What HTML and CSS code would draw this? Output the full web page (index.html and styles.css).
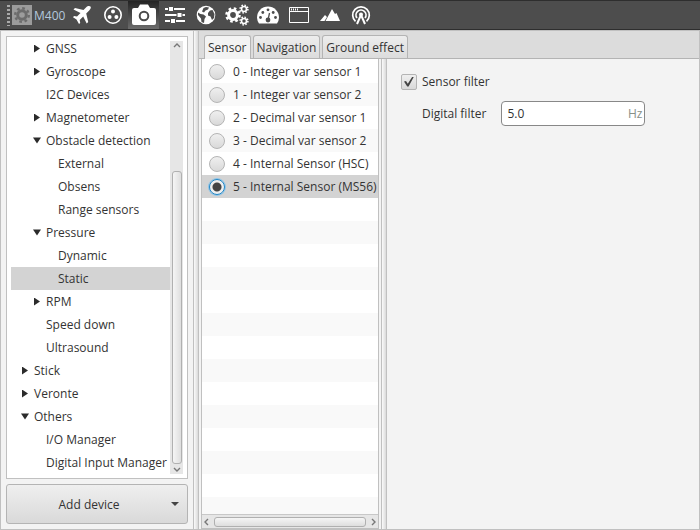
FILE: index.html
```html
<!DOCTYPE html>
<html lang="en">
<head>
    <meta charset="UTF-8">
    <meta name="viewport" content="width=device-width, initial-scale=1.0">
    <title>M400</title>
    <link rel="stylesheet" href="styles.css">
</head>
<body>
    <header class="toolbar">
        <span class="grip"></span>
        <span class="platform">
            <svg viewBox="0 0 20 20" width="20" height="20">
                <rect width="20" height="20" fill="#9c9c9c"/>
                <g fill="none" stroke="#6c6c6c">
                    <circle cx="10" cy="10" r="6.8" stroke-width="2.4" stroke-dasharray="2.67 2.67"/>
                    <circle cx="10" cy="10" r="4.3" stroke-width="3"/>
                </g>
            </svg>
            M400
        </span>
        <button class="tool" aria-label="Platform">
            <svg viewBox="0 0 20 20" width="20" height="20"><path fill="#fff" d="M18.5 1.500c-1-1-3-.5-4 .5l-3 3L3 3 1.500 4.500l7 3.500-3.500 3.500-3-.5L1 12.200l3.500 2.300L7 19l1.200-1-.5-3 3.500-3.500 3.500 7 1.500-1.500-2-8.500 3-3c1-1 2.300-3 1.300-4z"/></svg>
        </button>
        <button class="tool" aria-label="Control">
            <svg viewBox="0 0 20 20" width="20" height="20"><circle cx="10" cy="10" r="8.200" fill="none" stroke="#fff" stroke-width="1.600"/><g fill="#fff"><circle cx="10" cy="6.500" r="2"/><circle cx="6.600" cy="12" r="2"/><circle cx="13.400" cy="12" r="2"/></g></svg>
        </button>
        <button class="tool active" aria-label="Devices">
            <svg viewBox="0 0 26 22" width="26" height="22"><path fill="#fff" d="M3 4h4l2-3.500h8L19 4h4a2 2 0 0 1 2 2v13a2 2 0 0 1-2 2H3a2 2 0 0 1-2-2V6a2 2 0 0 1 2-2z"/><circle cx="13" cy="12" r="4.300" fill="none" stroke="#4a4a4a" stroke-width="2"/></svg>
        </button>
        <button class="tool" aria-label="Variables">
            <svg viewBox="0 0 20 20" width="20" height="20"><path d="M0 4h20M0 10h20M0 16h20" stroke="#fff" stroke-width="2"/><path fill="#fff" stroke="#4d4d4d" d="M3.500 1.500h5v5h-5zM12 7.500h5v5h-5zM5.500 13.500h5v5h-5z"/></svg>
        </button>
        <button class="tool" aria-label="World">
            <svg viewBox="0 0 20 20" width="20" height="20"><circle cx="10" cy="10" r="9.300" fill="#fff"/><path fill="#4d4d4d" d="M7.500 3l2.500-1 3 .5-1 2-2.500 1L8 7.500l-2-1zM2 7.500l2.500 1.500 3 .5 2.500 2-1.500 2.500-.5 4-2.500-1-.5-3.500L2 10zM12 8l2-2.500 2.500-.5 2 4-.5 4-2 2-1.500-3.500-2.500-1z"/></svg>
        </button>
        <button class="tool" aria-label="Setup">
            <svg viewBox="0 0 24 22" width="24" height="22" fill="none" stroke="#fff"><circle cx="8" cy="11" r="4.400" stroke-width="3"/><circle cx="8" cy="11" r="6.500" stroke-width="2.600" stroke-dasharray="2.550 2.550"/><circle cx="19" cy="5" r="2.500" stroke-width="1.600"/><circle cx="19" cy="5" r="3.900" stroke-width="1.500" stroke-dasharray="1.530 1.530"/><circle cx="19" cy="17" r="2.500" stroke-width="1.600"/><circle cx="19" cy="17" r="3.900" stroke-width="1.500" stroke-dasharray="1.530 1.530"/></svg>
        </button>
        <button class="tool" aria-label="Gauge">
            <svg viewBox="0 0 22 18" width="22" height="18">
                <path fill="#fff" d="M2 17.500A11 11 0 0 1 0 11.500a11 11 0 0 1 22 0 11 11 0 0 1-2 6z"/>
                <g fill="#4d4d4d"><circle cx="3.500" cy="11.500" r="1.400"/><circle cx="5.800" cy="6.500" r="1.400"/><circle cx="11" cy="3.800" r="1.400"/><circle cx="16.200" cy="6.500" r="1.400"/><circle cx="18.500" cy="11.500" r="1.400"/><circle cx="11" cy="14" r="2.400"/></g>
                <path d="M11 14l1.500-7" stroke="#4d4d4d" stroke-width="1.300"/>
            </svg>
        </button>
        <button class="tool" aria-label="Panel">
            <svg viewBox="0 0 20 18" width="20" height="18"><path d="M.5 1.500h19v15H.5zM.5 5.500h19" fill="none" stroke="#fff"/><path d="M2 3.500h7" stroke="#fff" stroke-width="2" stroke-dasharray="1 1"/></svg>
        </button>
        <button class="tool" aria-label="Terrain">
            <svg viewBox="0 0 20 14" width="20" height="14"><path fill="#fff" d="M0 13l5-6 2 2-2.500 4zM5.500 13l6.500-12 3 5 1.500-1L20 13z"/></svg>
        </button>
        <button class="tool" aria-label="Communications">
            <svg viewBox="0 0 20 20" width="20" height="20" fill="none" stroke="#fff" stroke-width="1.700"><path d="M4.500 16.300A8.300 8.300 0 1 1 15.500 16.300M6 13A5 5 0 1 1 14 13"/><path d="M6 19l3.500-8h1l3.500 8" stroke-width="2"/><circle cx="10" cy="9.500" r="2" fill="#fff" stroke="none"/></svg>
        </button>
    </header>

    <main class="content">
        <section class="sidebar">
            <div class="tree-box">
                <ul class="tree">
                    <li class="level-2 closed">GNSS</li>
                    <li class="level-2 closed">Gyroscope</li>
                    <li class="level-2">I2C Devices</li>
                    <li class="level-2 closed">Magnetometer</li>
                    <li class="level-2 open">Obstacle detection</li>
                    <li class="level-3">External</li>
                    <li class="level-3">Obsens</li>
                    <li class="level-3">Range sensors</li>
                    <li class="level-2 open">Pressure</li>
                    <li class="level-3">Dynamic</li>
                    <li class="level-3 selected">Static</li>
                    <li class="level-2 closed">RPM</li>
                    <li class="level-2">Speed down</li>
                    <li class="level-2">Ultrasound</li>
                    <li class="level-1 closed">Stick</li>
                    <li class="level-1 closed">Veronte</li>
                    <li class="level-1 open">Others</li>
                    <li class="level-2">I/O Manager</li>
                    <li class="level-2">Digital Input Manager</li>
                </ul>
                <div class="scroll-v">
                    <svg viewBox="0 0 8 5" width="8" height="5"><path d="M1 4l3-3 3 3"/></svg>
                    <div class="track-v"><div class="thumb-v"></div></div>
                    <svg viewBox="0 0 8 5" width="8" height="5"><path d="M1 1l3 3 3-3"/></svg>
                </div>
            </div>
            <button class="add-device">
                <span>Add device</span>
                <svg viewBox="0 0 8 4" width="8" height="4"><path d="M0 0h8L4 4z" fill="#444"/></svg>
            </button>
        </section>
        <div class="divider"></div>

        <section class="device">
            <nav class="tabs">
                <button class="tab current">Sensor</button>
                <button class="tab">Navigation</button>
                <button class="tab">Ground effect</button>
            </nav>
            <div class="tab-page">
                <div class="sensor-list">
                    <div class="rows">
                        <label><input type="radio" name="sensor">0 - Integer var sensor 1</label>
                        <label><input type="radio" name="sensor">1 - Integer var sensor 2</label>
                        <label><input type="radio" name="sensor">2 - Decimal var sensor 1</label>
                        <label><input type="radio" name="sensor">3 - Decimal var sensor 2</label>
                        <label><input type="radio" name="sensor">4 - Internal Sensor (HSC)</label>
                        <label class="selected"><input type="radio" name="sensor" checked>5 - Internal Sensor (MS56)</label>
                    </div>
                    <div class="scroll-h">
                        <svg viewBox="0 0 5 8" width="5" height="8"><path d="M4 1L1 4l3 3"/></svg>
                        <div class="thumb-h"></div>
                        <svg viewBox="0 0 5 8" width="5" height="8"><path d="M1 1l3 3-3 3"/></svg>
                    </div>
                </div>
                <div class="divider"></div>
                <form class="settings">
                    <label class="check"><input type="checkbox" checked>Sensor filter</label>
                    <div class="field">
                        <label for="digital-filter">Digital filter</label>
                        <div class="unit-input">
                            <input type="text" id="digital-filter" value="5.0">
                            <span>Hz</span>
                        </div>
                    </div>
                </form>
            </div>
        </section>
    </main>
</body>
</html>
```
FILE: styles.css
```css
* {
    box-sizing: border-box;
}
body {
    margin: 0;
    height: 100vh;
    display: flex;
    flex-direction: column;
    background-color: #f3f3f3;
    color: #333;
    font-family: "Open Sans", "Noto Sans", sans-serif;
    font-size: 12px;
}
button, input {
    font: inherit;
    color: inherit;
}

/* toolbar */
.toolbar {
    display: flex;
    height: 30px;
    padding-left: 7px;
    background-color: #4d4d4d;
    border-top: 1px solid #2e2e2e;
    border-bottom: 1px solid #2e2e2e;
}
.grip {
    width: 3px;
    margin: 4px 2px 3px 0;
    background: repeating-linear-gradient(#aaa 0 2px, transparent 2px 4px);
}
.platform {
    display: flex;
    align-items: center;
    gap: 2px;
    width: 54px;
    color: #b4c8dc;
}
.tool {
    display: flex;
    align-items: center;
    justify-content: center;
    width: 31px;
    padding: 0;
    border: none;
    background: none;
}
.tool.active {
    background: linear-gradient(#242424, #6c6c6c);
}

/* main areas */
.content {
    flex: 1;
    display: flex;
    min-height: 0;
    border: 1px solid #c0c0c0;
}
.divider {
    width: 6px;
    background: linear-gradient(to right, #fafafa, #dadada);
    border-left: 1px solid #c0c0c0;
    border-right: 1px solid #c0c0c0;
}
.sidebar {
    display: flex;
    flex-direction: column;
    gap: 5px;
    width: 192px;
    padding: 5px;
}
.tree-box {
    flex: 1;
    display: flex;
    min-height: 0;
    padding: 0 4px;
    background-color: #fff;
    border: 1px solid #c0c0c0;
}
.tree {
    flex: 1;
    margin: 0;
    padding: 0;
    list-style: none;
    overflow: hidden;
    white-space: nowrap;
}
.tree li {
    display: flex;
    align-items: center;
    height: 23px;
}
.tree li::before {
    content: "";
    width: 8px;
    height: 8px;
    margin-right: 5px;
}
.tree .closed::before {
    background-color: #2b2b2b;
    clip-path: polygon(1px 0, 7px 4px, 1px 8px);
}
.tree .open::before {
    background-color: #2b2b2b;
    clip-path: polygon(0 1px, 8px 1px, 4px 7px);
}
.level-1 { padding-left: 10px; }
.level-2 { padding-left: 22px; }
.level-3 { padding-left: 34px; }
.tree .selected {
    background-color: #d3d3d3;
}

/* scroll bars */
.scroll-v {
    display: flex;
    flex-direction: column;
    align-items: center;
    gap: 3px;
    width: 13px;
    margin: 4px 0;
    padding: 2px 0;
    background-color: #e6e6e6;
}
.scroll-v path, .scroll-h path {
    fill: none;
    stroke: #777;
    stroke-width: 1.4;
}
.track-v {
    flex: 1;
    display: flex;
    align-items: flex-end;
    width: 10px;
}
.thumb-v {
    width: 10px;
    height: 71%;
    background: linear-gradient(to right, #f5f5f5, #dedede);
    border: 1px solid #b0b0b0;
    border-radius: 3px;
}
.scroll-h {
    display: flex;
    align-items: center;
    gap: 5px;
    height: 14px;
    padding: 0 2px;
    background-color: #e6e6e6;
    border-top: 1px solid #c8c8c8;
}
.thumb-h {
    flex: 1;
    height: 10px;
    background: linear-gradient(#f5f5f5, #dedede);
    border: 1px solid #b0b0b0;
    border-radius: 3px;
}

.add-device {
    display: flex;
    align-items: center;
    height: 40px;
    padding: 0 8px 0 0;
    background: linear-gradient(#efefef, #d9d9d9);
    border: 1px solid #b4b4b4;
    border-radius: 3px;
}
.add-device span {
    flex: 1;
}

/* tabs */
.device {
    flex: 1;
    display: flex;
    flex-direction: column;
    min-width: 0;
}
.tabs {
    display: flex;
    align-items: flex-end;
    gap: 2px;
    height: 28px;
    padding-left: 5px;
    background-color: #dcdcdc;
    border-bottom: 1px solid #b4b4b4;
}
.tab {
    height: 23px;
    padding: 0 3px;
    background: linear-gradient(#ededed, #dcdcdc);
    border: 1px solid #b4b4b4;
    border-bottom: none;
    border-radius: 3px 3px 0 0;
}
.tab.current {
    height: 24px;
    margin-bottom: -1px;
    background: #f3f3f3;
}
.tab-page {
    flex: 1;
    display: flex;
    min-height: 0;
    padding-left: 2px;
}

/* sensor list */
.sensor-list {
    display: flex;
    flex-direction: column;
    width: 178px;
    margin-right: 2px;
    padding-top: 1px;
    background-color: #fff;
    border: 1px solid #c0c0c0;
    border-top: none;
}
.rows {
    flex: 1;
    background: repeating-linear-gradient(#fff 0 23px, #f9f9f9 23px 46px);
}
.rows label {
    display: flex;
    align-items: center;
    gap: 8px;
    height: 23px;
    padding-left: 7px;
    white-space: nowrap;
}
.rows .selected {
    background-color: #d3d3d3;
}
.rows input {
    appearance: none;
    width: 16px;
    height: 16px;
    margin: 0;
    background: linear-gradient(#efefef, #d9d9d9);
    border: 1px solid #b4b4b4;
    border-radius: 50%;
}
.rows input:checked {
    background: radial-gradient(circle, #444 0 4px, #eee 5px);
    border-color: #1e86c8;
    box-shadow: 0 0 0 1px #8cc4e8;
}

/* settings form */
.settings {
    flex: 1;
    display: flex;
    flex-direction: column;
    gap: 11px;
    padding: 14px;
}
.check {
    display: flex;
    align-items: center;
    gap: 5px;
}
.check input {
    appearance: none;
    width: 16px;
    height: 16px;
    margin: 0;
    padding: 2px;
    background: linear-gradient(#efefef, #d9d9d9);
    border: 1px solid #b4b4b4;
    border-radius: 2px;
}
.check input:checked::after {
    content: "";
    display: block;
    width: 10px;
    height: 10px;
    background-color: #444;
    clip-path: polygon(0 50%, 20% 45%, 38% 72%, 84% 0, 100% 0, 46% 100%, 32% 100%);
}
.field {
    display: flex;
    align-items: center;
    gap: 15px;
    padding-left: 21px;
}
.unit-input {
    display: flex;
    align-items: center;
    width: 144px;
    height: 25px;
    padding: 0 2px 0 5px;
    background-color: #fff;
    border: 1px solid #888;
    border-radius: 4px;
}
.unit-input input {
    flex: 1;
    min-width: 0;
    padding: 0;
    border: none;
    outline: none;
    background: none;
}
.unit-input span {
    color: #889088;
}
```
